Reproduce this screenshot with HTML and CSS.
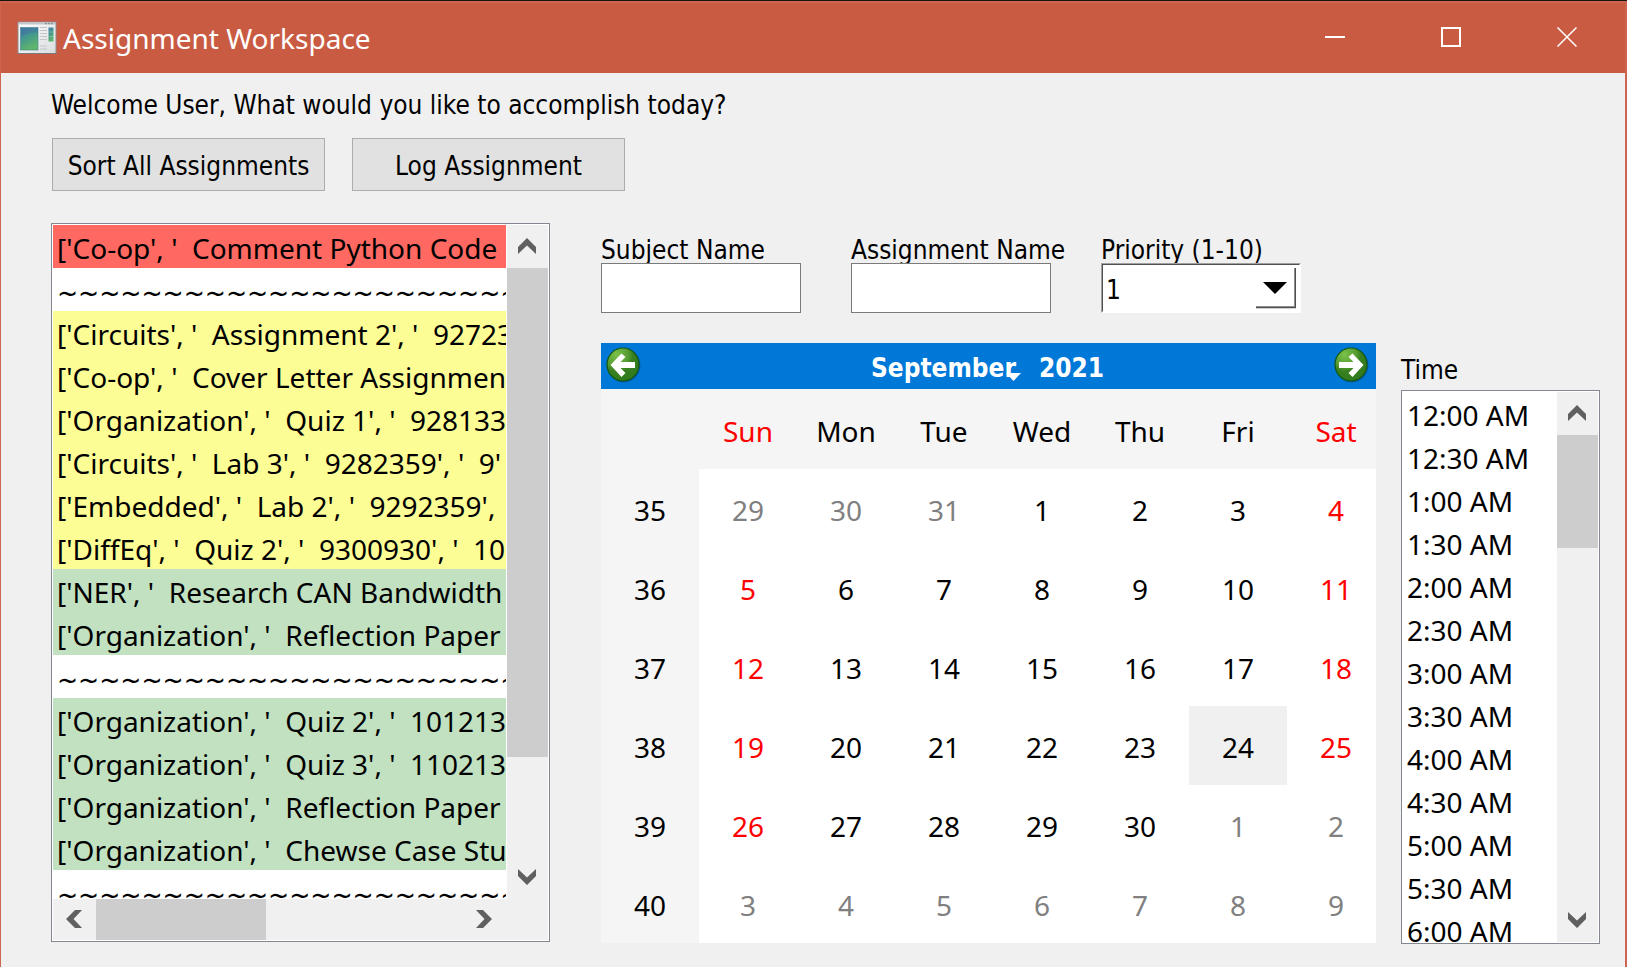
FILE: index.html
```html
<!DOCTYPE html>
<html lang="en">
<head>
<meta charset="utf-8">
<title>Assignment Workspace</title>
<link rel="stylesheet" href="styles.css">
</head>
<body>
<div class="window">
  <header class="titlebar">
    <svg class="app-icon" width="40" height="34" viewBox="0 0 40 34" aria-hidden="true">
      <defs>
        <linearGradient id="pane" x1="0" y1="0" x2="0.4" y2="1"><stop offset="0" stop-color="#4379a8"/><stop offset="0.5" stop-color="#45998c"/><stop offset="1" stop-color="#5fb56c"/></linearGradient>
        <linearGradient id="frame" x1="0" y1="0" x2="1" y2="1"><stop offset="0" stop-color="#ffffff"/><stop offset="1" stop-color="#d9dcdf"/></linearGradient>
      </defs>
      <rect x="1" y="1" width="38" height="31.500" fill="url(#frame)" stroke="#8f8a8c"/>
      <path d="M2 2.500h36" stroke="#c3c8cc" stroke-width="2"/>
      <path d="M28 2.500h9" stroke="#8e979c" stroke-width="1.500" stroke-dasharray="2 1"/>
      <rect x="3.500" y="6.500" width="17.500" height="22.500" fill="url(#pane)" stroke="#3f7f94" stroke-width="0.600"/>
      <path d="M4 16c5-4 11-5 17-4V7H4z" fill="#3b6fa0" opacity="0.400"/>
      <path d="M23 6.500h7M23 9.500h7M23 12.500h7M23 15.500h7M23 18.500h7M23 25h7M23 28h7" stroke="#c2c6c9"/>
      <rect x="31.500" y="6.500" width="5" height="14" fill="url(#pane)"/>
      <path d="M31.500 11h5M31.500 15.500h5" stroke="#9fc5c0" stroke-width="0.600"/>
      <path d="M1 32.500h38.500" stroke="#777b80"/>
    </svg>
    <h1 class="title">Assignment Workspace</h1>
    <div class="window-controls">
      <button type="button" class="window-button" aria-label="Minimize"><svg width="20" height="20"><path d="M0 10h20" stroke="#fff" stroke-width="2"/></svg></button>
      <button type="button" class="window-button" aria-label="Maximize"><svg width="20" height="20"><rect x="1" y="1" width="18" height="18" fill="none" stroke="#fff" stroke-width="2"/></svg></button>
      <button type="button" class="window-button" aria-label="Close"><svg width="20" height="20"><path d="M0.500 0.500l19 19M19.500 0.500l-19 19" stroke="#fff" stroke-width="1.500"/></svg></button>
    </div>
  </header>

  <main class="content">
    <p class="welcome">Welcome User, What would you like to accomplish today?</p>
    <div class="actions">
      <button type="button" class="action">Sort All Assignments</button>
      <button type="button" class="action">Log Assignment</button>
    </div>

    <div class="workspace">
      <section class="list-box assignments" aria-label="Assignments">
        <ul class="list">
          <li class="row high">['Co-op', '  Comment Python Code</li>
          <li class="row rule">~~~~~~~~~~~~~~~~~~~~~~</li>
          <li class="row medium">['Circuits', '  Assignment 2', '  92723</li>
          <li class="row medium">['Co-op', '  Cover Letter Assignmen</li>
          <li class="row medium">['Organization', '  Quiz 1', '  928133</li>
          <li class="row medium">['Circuits', '  Lab 3', '  9282359', '  9'</li>
          <li class="row medium">['Embedded', '  Lab 2', '  9292359',</li>
          <li class="row medium">['DiffEq', '  Quiz 2', '  9300930', '  10</li>
          <li class="row low">['NER', '  Research CAN Bandwidth</li>
          <li class="row low">['Organization', '  Reflection Paper</li>
          <li class="row rule">~~~~~~~~~~~~~~~~~~~~~~</li>
          <li class="row low">['Organization', '  Quiz 2', '  101213</li>
          <li class="row low">['Organization', '  Quiz 3', '  110213</li>
          <li class="row low">['Organization', '  Reflection Paper</li>
          <li class="row low">['Organization', '  Chewse Case Stu</li>
          <li class="row rule">~~~~~~~~~~~~~~~~~~~~~~</li>
        </ul>
        <div class="scroll vertical">
          <button type="button" class="scroll-button" aria-label="Scroll up"><svg width="18" height="16"><path d="M9 0l9 9v7L9 7.500 0 16V9z" fill="#606060"/></svg></button>
          <div class="thumb"></div>
          <div></div>
          <button type="button" class="scroll-button" aria-label="Scroll down"><svg width="18" height="16"><path d="M9 16l9-9V0L9 8.500 0 0v7z" fill="#606060"/></svg></button>
        </div>
        <div class="scroll horizontal">
          <button type="button" class="scroll-button" aria-label="Scroll left"><svg width="16" height="18"><path d="M0 9l9 9h7L7.500 9 16 0H9z" fill="#606060"/></svg></button>
          <div class="thumb"></div>
          <div></div>
          <button type="button" class="scroll-button" aria-label="Scroll right"><svg width="16" height="18"><path d="M16 9l-9 9H0l8.500-9L0 0h7z" fill="#606060"/></svg></button>
        </div>
        <div class="corner"></div>
      </section>

      <section class="planner">
        <form class="fields">
          <div class="field">
            <label class="label" for="subject">Subject Name</label>
            <input class="input" id="subject" type="text">
          </div>
          <div class="field">
            <label class="label" for="assignment">Assignment Name</label>
            <input class="input" id="assignment" type="text">
          </div>
          <div class="field">
            <label class="label" for="priority">Priority (1-10)</label>
            <div class="combo">
              <select class="select" id="priority">
                <option>1</option><option>2</option><option>3</option><option>4</option><option>5</option>
                <option>6</option><option>7</option><option>8</option><option>9</option><option>10</option>
              </select>
              <svg class="combo-arrow" width="40" height="41" aria-hidden="true">
                <path d="M0 38.500h38.500V0" fill="none" stroke="#a0a0a0"/>
                <path d="M0 39.500h39.500V0" fill="none" stroke="#505050" stroke-width="1.500"/>
                <path d="M7 14h24L19 26z" fill="#000"/>
              </svg>
            </div>
          </div>
        </form>

        <div class="schedule">
          <div class="calendar">
            <div class="calendar-nav">
              <button type="button" class="nav-button" aria-label="Previous month">
                <svg width="35" height="36" viewBox="0 0 35 36">
                  <defs><radialGradient id="ball" cx="0.300" cy="0.200" r="0.850"><stop offset="0" stop-color="#7cc24a"/><stop offset="0.450" stop-color="#549a30"/><stop offset="0.600" stop-color="#38801f"/><stop offset="1" stop-color="#2f7a1d"/></radialGradient></defs>
                  <ellipse cx="18" cy="18.500" rx="16.500" ry="17" fill="#00346b" opacity="0.400"/>
                  <ellipse cx="17" cy="17.500" rx="16" ry="16.500" fill="url(#ball)" stroke="#14560f" stroke-width="1.200"/>
                  <path d="M4.500 18L15.500 6.500l4 3.500-5 5H29v6H14.500l5 5-4 4z" fill="#fff"/>
                </svg>
              </button>
              <div class="calendar-title">
                <button type="button" class="title-button month">September<svg class="month-arrow" width="15" height="8" aria-hidden="true"><path d="M0 0h15L7.500 8z" fill="#fff"/></svg></button>
                <button type="button" class="title-button">2021</button>
              </div>
              <button type="button" class="nav-button" aria-label="Next month">
                <svg width="35" height="36" viewBox="0 0 35 36">
                  <ellipse cx="18" cy="18.500" rx="16.500" ry="17" fill="#00346b" opacity="0.400"/>
                  <ellipse cx="17" cy="17.500" rx="16" ry="16.500" fill="url(#ball)" stroke="#14560f" stroke-width="1.200"/>
                  <path d="M29.500 18L18.500 6.500l-4 3.500 5 5H5v6h14.500l-5 5 4 4z" fill="#fff"/>
                </svg>
              </button>
            </div>
            <table class="days">
              <thead>
                <tr><th></th><th class="weekend">Sun</th><th>Mon</th><th>Tue</th><th>Wed</th><th>Thu</th><th>Fri</th><th class="weekend">Sat</th></tr>
              </thead>
              <tbody>
                <tr><th>35</th><td class="other">29</td><td class="other">30</td><td class="other">31</td><td>1</td><td>2</td><td>3</td><td class="weekend">4</td></tr>
                <tr><th>36</th><td class="weekend">5</td><td>6</td><td>7</td><td>8</td><td>9</td><td>10</td><td class="weekend">11</td></tr>
                <tr><th>37</th><td class="weekend">12</td><td>13</td><td>14</td><td>15</td><td>16</td><td>17</td><td class="weekend">18</td></tr>
                <tr><th>38</th><td class="weekend">19</td><td>20</td><td>21</td><td>22</td><td>23</td><td class="selected">24</td><td class="weekend">25</td></tr>
                <tr><th>39</th><td class="weekend">26</td><td>27</td><td>28</td><td>29</td><td>30</td><td class="other">1</td><td class="other">2</td></tr>
                <tr><th>40</th><td class="other">3</td><td class="other">4</td><td class="other">5</td><td class="other">6</td><td class="other">7</td><td class="other">8</td><td class="other">9</td></tr>
              </tbody>
            </table>
          </div>

          <div class="time">
            <h2 class="time-label">Time</h2>
            <div class="list-box times">
              <ul class="list">
                <li class="row">12:00 AM</li>
                <li class="row">12:30 AM</li>
                <li class="row">1:00 AM</li>
                <li class="row">1:30 AM</li>
                <li class="row">2:00 AM</li>
                <li class="row">2:30 AM</li>
                <li class="row">3:00 AM</li>
                <li class="row">3:30 AM</li>
                <li class="row">4:00 AM</li>
                <li class="row">4:30 AM</li>
                <li class="row">5:00 AM</li>
                <li class="row">5:30 AM</li>
                <li class="row">6:00 AM</li>
              </ul>
              <div class="scroll vertical">
                <button type="button" class="scroll-button" aria-label="Scroll up"><svg width="18" height="16"><path d="M9 0l9 9v7L9 7.500 0 16V9z" fill="#606060"/></svg></button>
                <div class="thumb"></div>
                <div></div>
                <button type="button" class="scroll-button" aria-label="Scroll down"><svg width="18" height="16"><path d="M9 16l9-9V0L9 8.500 0 0v7z" fill="#606060"/></svg></button>
              </div>
            </div>
          </div>
        </div>
      </section>
    </div>
  </main>
</div>
</body>
</html>
```
FILE: styles.css
```css
:root {
  --ui: "DejaVu Sans Condensed", "DejaVu Sans", sans-serif;
  --text: "Noto Sans", "Open Sans", sans-serif;
}

* { box-sizing: border-box; }

body {
  margin: 0;
  padding-top: 1px;
  height: 100vh;
  background: #17130f;
  color: #000;
  font: 26px/32px var(--ui);
}

button {
  margin: 0;
  padding: 0;
  border: 0;
  background: none;
  color: inherit;
  font: inherit;
}

svg { display: block; }

.window {
  display: flex;
  flex-direction: column;
  height: 100%;
  border: solid #cf6450;
  border-width: 2px 2px 0 1px;
  background: #f0f0f0;
}

.titlebar {
  display: flex;
  flex: none;
  align-items: center;
  height: 70px;
  padding-left: 16px;
  background: #c95b42;
  color: #fff;
}

.title {
  flex: 1;
  margin: 0 0 0 6px;
  font: 400 28px/40px var(--text);
}

.window-controls {
  display: flex;
  align-self: stretch;
}

.window-button {
  display: grid;
  place-items: center;
  width: 116px;
  padding-bottom: 2px;
}

.content {
  display: flex;
  flex: 1;
  flex-direction: column;
  min-height: 0;
  padding: 16px 25px 23px 50px;
}

.welcome { margin: 0 0 17px; }

.actions {
  display: flex;
  gap: 27px;
  margin: 0 0 32px 1px;
}

.action {
  width: 273px;
  height: 53px;
  padding-top: 2px;
  border: 1px solid #adadad;
  background: #e1e1e1;
}

.workspace {
  display: grid;
  flex: 1;
  grid-template-columns: minmax(0, 499fr) minmax(0, 999fr);
  gap: 51px;
  min-height: 0;
}

.list-box {
  display: grid;
  grid-template-columns: minmax(0, 1fr) 41px;
  gap: 0 1px;
  min-height: 0;
  padding: 1px;
  border: 1px solid #828790;
  background: #fff;
}

.assignments {
  grid-template-rows: minmax(0, 1fr) 41px;
  margin-bottom: 2px;
}

.times { grid-template-rows: minmax(0, 1fr); }

.list {
  margin: 0;
  padding: 0;
  overflow: hidden;
  list-style: none;
}

.row {
  height: 43px;
  padding: 3px 0 0 4px;
  font: 28px/40px var(--text);
  white-space: pre;
}

.high { background: #ff6961; }
.medium { background: #fdfd96; }
.low { background: #c1e1c1; }

.rule {
  padding-top: 6px;
  font-family: var(--ui);
}

.scroll {
  display: grid;
  background: #f0f0f0;
}

.assignments .vertical { grid-template-rows: 43px 489fr 99fr 43px; }
.assignments .horizontal { grid-template-columns: 43px 170fr 197fr 43px; }
.times .vertical { grid-template-rows: 43px 113fr 352fr 43px; }

.thumb { background: #cdcdcd; }

.scroll-button {
  display: grid;
  place-items: center;
  padding: 0 2px 2px 0;
}

.corner {
  margin-left: -1px;
  background: #f0f0f0;
}

.planner {
  display: flex;
  flex-direction: column;
  gap: 30px;
  min-height: 0;
  padding-top: 9px;
}

.fields {
  display: flex;
  gap: 50px;
  margin: 0;
}

.field {
  display: flex;
  flex-direction: column;
  width: 200px;
}

.label {
  height: 31px;
  line-height: 36px;
  white-space: nowrap;
}

.input {
  width: 100%;
  height: 50px;
  padding: 0 6px;
  border: 1px solid #7a7a7a;
  border-radius: 0;
  background: #fff;
  font: inherit;
}

.combo {
  position: relative;
  height: 50px;
  border: 1px solid;
  border-color: #a0a0a0 #fff #fff #a0a0a0;
}

.select {
  display: block;
  width: 100%;
  height: 100%;
  padding: 4px 42px 0 3px;
  border: 1px solid;
  border-color: #505050 #fff #fff #505050;
  border-radius: 0;
  background: #fff;
  color: #000;
  font: inherit;
  appearance: none;
}

.combo-arrow {
  position: absolute;
  top: 4px;
  right: 4px;
  pointer-events: none;
}

.schedule {
  display: grid;
  flex: 1;
  grid-template-columns: minmax(0, 775fr) minmax(0, 199fr);
  gap: 25px;
  min-height: 0;
}

.calendar {
  display: flex;
  flex-direction: column;
  margin-bottom: 1px;
  overflow: hidden;
  background: #fff;
}

.calendar-nav {
  display: flex;
  flex: none;
  align-items: center;
  justify-content: space-between;
  height: 46px;
  padding: 0 7px 2px 5px;
  background: #0078d7;
  color: #fff;
}

.calendar-title {
  display: flex;
  gap: 23px;
  padding-top: 6px;
  font-weight: 700;
}

.month { position: relative; }

.month-arrow {
  position: absolute;
  right: -5px;
  bottom: 3px;
}

.days {
  flex: 1;
  width: calc(100% + 9px);
  border-collapse: collapse;
  table-layout: fixed;
  font: 28px/40px var(--text);
  text-align: center;
}

.days th,
.days td {
  height: 79px;
  padding: 3px 0 0;
}

.days th {
  background: #f5f5f5;
  font-weight: 400;
}

.days thead th { height: 80px; }

.days .weekend { color: #f00; }
.days .other { color: #808080; }
.days .selected { background: #f0f0f0; }

.time {
  display: flex;
  flex-direction: column;
  min-height: 0;
}

.time-label {
  margin: 11px 0 4px;
  font: 400 26px/32px var(--ui);
}

.times { flex: 1; }
```
